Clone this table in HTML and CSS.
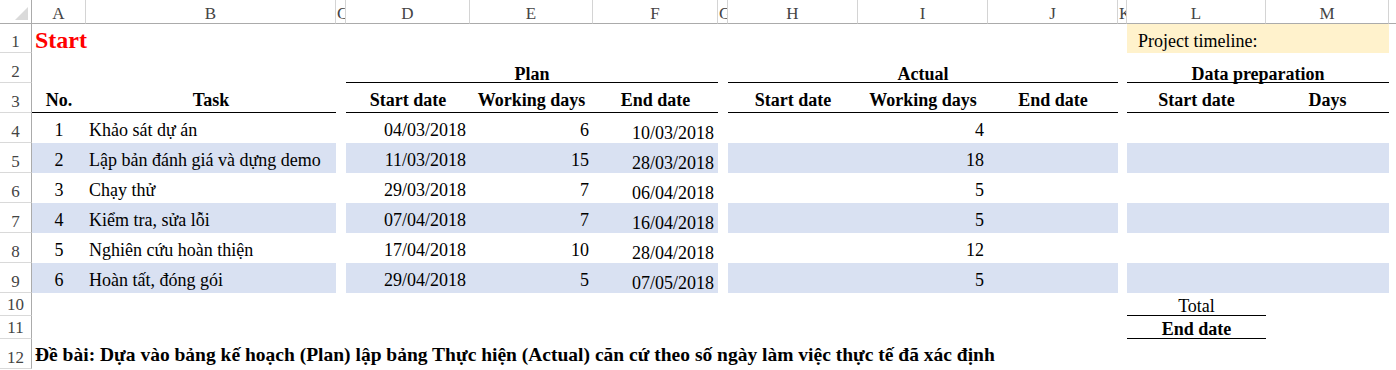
FILE: index.html
```html
<!DOCTYPE html>
<html lang="vi">
<head>
<meta charset="utf-8">
<title>Project timeline</title>
<link rel="stylesheet" href="styles.css">
</head>
<body>
<div class="sheet">
  <!-- column headers -->
  <div class="corner"><svg width="31" height="23" viewBox="0 0 31 23"><polygon points="28,7 28,20 15,20" fill="#dadada"/></svg></div>
  <div class="ch">A</div><div class="ch">B</div><div class="ch nar">C</div><div class="ch">D</div><div class="ch">E</div><div class="ch">F</div><div class="ch nar">G</div><div class="ch">H</div><div class="ch">I</div><div class="ch">J</div><div class="ch nar">K</div><div class="ch">L</div><div class="ch">M</div><div class="ch last"></div>

  <!-- row 1 -->
  <div class="rh">1</div>
  <div class="c start">Start</div>
  <div class="c"></div><div class="c"></div><div class="c"></div><div class="c"></div><div class="c"></div><div class="c"></div><div class="c"></div><div class="c"></div><div class="c"></div><div class="c"></div>
  <div class="c proj span2">Project timeline:</div>
  <div class="c"></div>

  <!-- row 2 -->
  <div class="rh">2</div>
  <div class="c"></div><div class="c"></div><div class="c"></div>
  <div class="c grp span3">Plan</div>
  <div class="c"></div>
  <div class="c grp span3">Actual</div>
  <div class="c"></div>
  <div class="c grp span2">Data preparation</div>
  <div class="c"></div>

  <!-- row 3 -->
  <div class="rh">3</div>
  <div class="c hd">No.</div><div class="c hd">Task</div><div class="c"></div>
  <div class="c hd">Start date</div><div class="c hd">Working days</div><div class="c hd">End date</div><div class="c"></div>
  <div class="c hd">Start date</div><div class="c hd">Working days</div><div class="c hd">End date</div><div class="c"></div>
  <div class="c hd">Start date</div><div class="c hd">Days</div><div class="c"></div>

  <!-- row 4 -->
  <div class="rh">4</div>
  <div class="c ctr">1</div><div class="c l">Khảo sát dự án</div><div class="c"></div>
  <div class="c r">04/03/2018</div><div class="c r">6</div><div class="c r end">10/03/2018</div><div class="c"></div>
  <div class="c"></div><div class="c r">4</div><div class="c"></div><div class="c"></div>
  <div class="c"></div><div class="c"></div><div class="c"></div>

  <!-- row 5 -->
  <div class="rh">5</div>
  <div class="c ctr sh">2</div><div class="c l sh">Lập bản đánh giá và dựng demo</div><div class="c"></div>
  <div class="c r sh">11/03/2018</div><div class="c r sh">15</div><div class="c r end sh">28/03/2018</div><div class="c"></div>
  <div class="c sh"></div><div class="c r sh">18</div><div class="c sh"></div><div class="c"></div>
  <div class="c sh"></div><div class="c sh"></div><div class="c"></div>

  <!-- row 6 -->
  <div class="rh">6</div>
  <div class="c ctr">3</div><div class="c l">Chạy thử</div><div class="c"></div>
  <div class="c r">29/03/2018</div><div class="c r">7</div><div class="c r end">06/04/2018</div><div class="c"></div>
  <div class="c"></div><div class="c r">5</div><div class="c"></div><div class="c"></div>
  <div class="c"></div><div class="c"></div><div class="c"></div>

  <!-- row 7 -->
  <div class="rh">7</div>
  <div class="c ctr sh">4</div><div class="c l sh">Kiểm tra, sửa lỗi</div><div class="c"></div>
  <div class="c r sh">07/04/2018</div><div class="c r sh">7</div><div class="c r end sh">16/04/2018</div><div class="c"></div>
  <div class="c sh"></div><div class="c r sh">5</div><div class="c sh"></div><div class="c"></div>
  <div class="c sh"></div><div class="c sh"></div><div class="c"></div>

  <!-- row 8 -->
  <div class="rh">8</div>
  <div class="c ctr">5</div><div class="c l">Nghiên cứu hoàn thiện</div><div class="c"></div>
  <div class="c r">17/04/2018</div><div class="c r">10</div><div class="c r end">28/04/2018</div><div class="c"></div>
  <div class="c"></div><div class="c r">12</div><div class="c"></div><div class="c"></div>
  <div class="c"></div><div class="c"></div><div class="c"></div>

  <!-- row 9 -->
  <div class="rh">9</div>
  <div class="c ctr sh">6</div><div class="c l sh">Hoàn tất, đóng gói</div><div class="c"></div>
  <div class="c r sh">29/04/2018</div><div class="c r sh">5</div><div class="c r end sh">07/05/2018</div><div class="c"></div>
  <div class="c sh"></div><div class="c r sh">5</div><div class="c sh"></div><div class="c"></div>
  <div class="c sh"></div><div class="c sh"></div><div class="c"></div>

  <!-- row 10 -->
  <div class="rh">10</div>
  <div class="c"></div><div class="c"></div><div class="c"></div><div class="c"></div><div class="c"></div><div class="c"></div><div class="c"></div><div class="c"></div><div class="c"></div><div class="c"></div><div class="c"></div>
  <div class="c tot">Total</div><div class="c"></div><div class="c"></div>

  <!-- row 11 -->
  <div class="rh">11</div>
  <div class="c"></div><div class="c"></div><div class="c"></div><div class="c"></div><div class="c"></div><div class="c"></div><div class="c"></div><div class="c"></div><div class="c"></div><div class="c"></div><div class="c"></div>
  <div class="c tot bold">End date</div><div class="c"></div><div class="c"></div>

  <!-- row 12 -->
  <div class="rh">12</div>
  <div class="c note">Đề bài: Dựa vào bảng kế hoạch (Plan) lập bảng Thực hiện (Actual) căn cứ theo số ngày làm việc thực tế đã xác định</div>
</div>
</body>
</html>
```

FILE: styles.css
```css
html, body {
  margin: 0;
  padding: 0;
  background: #ffffff;
}

body {
  width: 1396px;
  height: 370px;
  overflow: hidden;
  font-family: "Liberation Serif", "Times New Roman", serif;
  color: #000;
}

.sheet {
  display: grid;
  grid-template-columns: 32px 54px 250px 10px 124px 123px 125px 10px 130px 130px 130px 9px 139px 123px 1fr;
  grid-template-rows: 24px 29px 30px 30px repeat(6, 30px) 23px 23px 30px;
  width: 1396px;
}

/* headers */
.corner {
  border-right: 1px solid #ababab;
  border-bottom: 1px solid #ababab;
  box-sizing: border-box;
  display: flex;
}

.ch {
  box-sizing: border-box;
  border-right: 1px solid #d4d4d4;
  border-bottom: 1px solid #ababab;
  display: flex;
  align-items: flex-end;
  justify-content: center;
  font-size: 17px;
  line-height: 18px;
  color: #444;
  overflow: hidden;
  white-space: nowrap;
}

.ch.nar {
  justify-content: flex-start;
  padding-left: 1px;
}

.ch.last {
  border-right: none;
}

.rh {
  box-sizing: border-box;
  border-right: 1px solid #ababab;
  border-bottom: 1px solid #d9d9d9;
  display: flex;
  align-items: flex-end;
  justify-content: center;
  font-size: 17px;
  line-height: 20px;
  color: #444;
}

/* cells */
.c {
  box-sizing: border-box;
  display: flex;
  align-items: flex-end;
  font-size: 18px;
  line-height: 20px;
  padding-bottom: 3px;
  white-space: nowrap;
  min-width: 0;
}

.sh {
  background: #d9e1f2;
}

.l {
  padding-left: 3px;
}

.r {
  justify-content: flex-end;
  padding-right: 4px;
}

.ctr {
  justify-content: center;
}

.end {
  padding-bottom: 0;
}

.span2 {
  grid-column: span 2;
}

.span3 {
  grid-column: span 3;
}

.start {
  color: #ff0000;
  font-weight: bold;
  font-size: 24px;
  line-height: 26px;
  padding-bottom: 0;
  padding-left: 3px;
  position: relative;
  z-index: 1;
}

.proj {
  background: #fff2cc;
  padding-left: 11px;
  padding-bottom: 2px;
}

.grp {
  font-weight: bold;
  justify-content: center;
  border-bottom: 1px solid #000;
  line-height: 16px;
  padding-bottom: 0;
}

.hd {
  font-weight: bold;
  justify-content: center;
  border-bottom: 1px solid #000;
  padding-bottom: 2px;
}

.tot {
  justify-content: center;
  border-bottom: 1px solid #000;
  line-height: 18px;
  padding-bottom: 0;
}

.bold {
  font-weight: bold;
}

.note {
  grid-column: span 14;
  font-weight: bold;
  font-size: 19.5px;
  line-height: 20px;
  padding-left: 3px;
  padding-bottom: 4px;
}
```
